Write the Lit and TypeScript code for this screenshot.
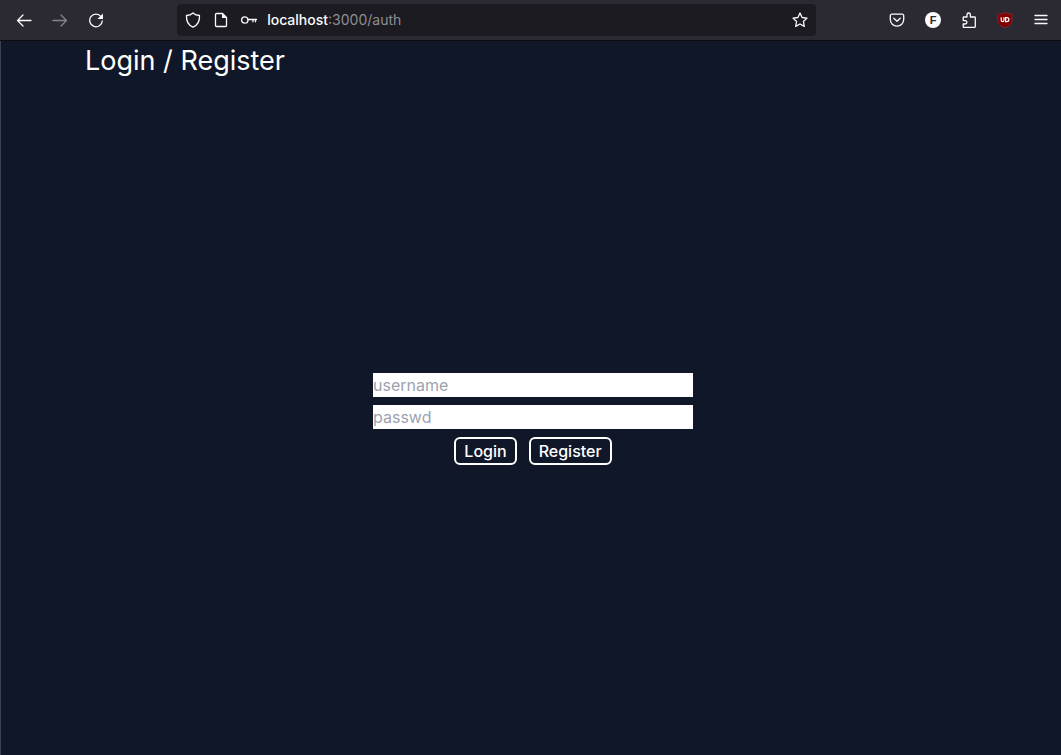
import { LitElement, html, css, svg } from "lit";
import { customElement, state } from "lit/decorators.js";

const icons = {
  back: svg`<path d="M15 8.500H1.500M7 3 1.500 8.500 7 14"/>`,
  forward: svg`<path d="M1 8.500h13.500M9 3l5.500 5.500L9 14"/>`,
  reload: svg`<path d="M13 4.600A6.300 6.300 0 1 0 14.300 9"/><path class="solid" d="M15 1.500v5.500H9.500z"/>`,
  shield: svg`<path d="M8 .9C6.300 2.400 4 3.300 1.500 3.500c-.3 5.500 1.700 9.700 6.500 11.700 4.800-2 6.800-6.200 6.500-11.700C12 3.300 9.700 2.400 8 .9z"/>`,
  page: svg`<path d="M3.500 1.500h6l4 4v8a1 1 0 0 1-1 1h-9a1 1 0 0 1-1-1v-11a1 1 0 0 1 1-1z"/><path class="solid" d="M9 1.500v4.500h4.500z"/>`,
  key: svg`<circle cx="3.800" cy="8" r="3.200"/><path d="M7 7.500h8.500M14.500 7.500v2.300M12 7.500v2.300"/>`,
  star: svg`<path d="m8 1 2.100 4.500 4.900.6-3.600 3.400.9 4.900L8 12l-4.300 2.400.9-4.900L1 6.100l4.900-.6z"/>`,
  pocket: svg`<path d="M2.800 2.200h10.400a1.500 1.500 0 0 1 1.500 1.500v3.800a6.700 6.700 0 0 1-13.400 0V3.700a1.500 1.500 0 0 1 1.500-1.500z"/><path d="M4.800 6.300 8 9.300l3.200-3"/>`,
  puzzle: svg`<path d="M2.500 5h3.500V2.700a1.700 1.700 0 0 1 3.400 0V5H13.500a.8.8 0 0 1 .8.8v8.800a.8.8 0 0 1-.8.8H3a.8.8 0 0 1-.8-.8V12h2a1.700 1.700 0 0 0 0-3.400h-2V5.400z"/>`,
  menu: svg`<path d="M2 3.500h12M2 7.500h12M2 11.500h12"/>`,
};

const icon = (name: keyof typeof icons) =>
  html`<svg class="icon" viewBox="0 0 16 16" aria-hidden="true">${icons[name]}</svg>`;

@customElement("browser-toolbar")
export class BrowserToolbar extends LitElement {
  static styles = css`
    :host {
      display: flex;
      align-items: center;
      height: 40px;
      padding: 0 2px 0 6px;
      background: #2b2a33;
      border-bottom: 1px solid #0c0c0d;
      color: #fbfbfe;
      font-family: Inter, "Liberation Sans", sans-serif;
    }
    .tool,
    .inner {
      display: grid;
      place-items: center;
      flex: none;
      padding: 0;
      border: 0;
      background: none;
      color: inherit;
    }
    .tool {
      width: 36px;
      height: 36px;
    }
    .inner {
      width: 28px;
      height: 32px;
    }
    .tool:disabled {
      color: #85848b;
    }
    .icon {
      display: block;
      width: 16px;
      height: 16px;
      fill: none;
      stroke: currentColor;
      stroke-width: 1.300;
      stroke-linecap: round;
      stroke-linejoin: round;
    }
    .solid {
      fill: currentColor;
      stroke: none;
    }
    .address {
      display: flex;
      align-items: center;
      flex: 1;
      min-width: 0;
      height: 32px;
      margin: 0 6%;
      padding: 0 2px;
      border-radius: 4px;
      background: #1c1b22;
    }
    .url {
      flex: 1;
      min-width: 0;
      padding-left: 4px;
      font-size: 14px;
      line-height: 20px;
      color: #8f8f94;
      white-space: nowrap;
      outline: none;
    }
    .host {
      color: #fbfbfe;
      font-weight: 500;
    }
    .avatar {
      display: grid;
      place-items: center;
      width: 16px;
      height: 16px;
      border-radius: 50%;
      background: #fbfbfe;
      color: #2b2a33;
      font-size: 11px;
      line-height: 16px;
      font-weight: 800;
    }
    .blocker {
      display: block;
      width: 16px;
      height: 16px;
    }
    .blocker-shape {
      fill: #800000;
      stroke: #a03038;
      stroke-width: 0.600;
    }
    .blocker-mark {
      fill: none;
      stroke: #fff;
      stroke-width: 1.200;
    }
  `;

  render() {
    return html`
      <button class="tool" aria-label="Back">${icon("back")}</button>
      <button class="tool" aria-label="Forward" disabled>${icon("forward")}</button>
      <button class="tool" aria-label="Reload">${icon("reload")}</button>
      <div class="address">
        <button class="inner" aria-label="Tracking protection">${icon("shield")}</button>
        <button class="inner" aria-label="Site information">${icon("page")}</button>
        <button class="inner" aria-label="Saved logins">${icon("key")}</button>
        <div class="url" role="textbox" aria-label="Address" contenteditable="true" spellcheck="false"><span class="host">localhost</span>:3000/auth</div>
        <button class="inner" aria-label="Bookmark">${icon("star")}</button>
      </div>
      <button class="tool" aria-label="Pocket">${icon("pocket")}</button>
      <button class="tool" aria-label="Account"><span class="avatar">F</span></button>
      <button class="tool" aria-label="Extensions">${icon("puzzle")}</button>
      <button class="tool" aria-label="Content blocker">
        <svg class="blocker" viewBox="0 0 16 16" aria-hidden="true">
          <path class="blocker-shape" d="M8 .4C6 1.600 3.500 2.200 .9 2.200V8c0 4 2.600 5.800 7.100 7.700 4.500-1.900 7.100-3.700 7.100-7.700V2.200C12.500 2.200 10 1.600 8 .4z" />
          <path class="blocker-mark" d="M4.200 5.200v2.800q0 1.600 1.400 1.600T7 8V5.200M8.600 5.600h1.300a2 2 0 0 1 0 4H8.600z" />
        </svg>
      </button>
      <button class="tool" aria-label="Menu">${icon("menu")}</button>
    `;
  }
}

@customElement("auth-page")
export class AuthPage extends LitElement {
  static styles = css`
    :host {
      display: flex;
      flex-direction: column;
      padding-left: 4px;
      color: #fff;
      font-family: Inter, "Liberation Sans", sans-serif;
      font-size: 16px;
      line-height: 24px;
    }
    .container {
      display: flex;
      flex-direction: column;
      flex: 1;
      width: 100%;
      max-width: 896px;
      margin: 0 auto;
    }
    .title {
      margin: 0 0 2px;
      font-size: 27px;
      line-height: 40px;
      font-weight: 400;
    }
    .form {
      display: flex;
      flex-direction: column;
      align-items: center;
      justify-content: center;
      flex: 1;
      gap: 8px;
    }
    .field {
      box-sizing: border-box;
      width: 320px;
      max-width: 100%;
      height: 24px;
      padding: 0;
      border: 0;
      border-radius: 0;
      background: #fff;
      color: #111827;
      font: inherit;
    }
    .field::placeholder {
      color: #9ca3af;
      opacity: 1;
    }
    .actions {
      display: flex;
      gap: 12px;
    }
    .action {
      padding: 0 8px;
      border: 2px solid #fff;
      border-radius: 6px;
      background: none;
      color: inherit;
      font: inherit;
      font-weight: 500;
    }
  `;

  @state() private username = "";
  @state() private password = "";

  render() {
    return html`
      <main class="container">
        <h1 class="title">Login / Register</h1>
        <form class="form" @submit=${(e: Event) => e.preventDefault()}>
          <input
            class="field"
            type="text"
            placeholder="username"
            aria-label="username"
            .value=${this.username}
            @input=${(e: Event) => (this.username = (e.target as HTMLInputElement).value)}
          />
          <input
            class="field"
            type="password"
            placeholder="passwd"
            aria-label="passwd"
            .value=${this.password}
            @input=${(e: Event) => (this.password = (e.target as HTMLInputElement).value)}
          />
          <div class="actions">
            <button class="action" type="submit">Login</button>
            <button class="action" type="button">Register</button>
          </div>
        </form>
      </main>
    `;
  }
}

@customElement("app-root")
export class AppRoot extends LitElement {
  static styles = css`
    :host {
      display: flex;
      flex-direction: column;
      box-sizing: border-box;
      min-height: 100vh;
      background: #101728;
    }
    .page {
      flex: 1;
      border-left: 1px solid #3b4252;
    }
  `;

  render() {
    return html`
      <browser-toolbar></browser-toolbar>
      <auth-page class="page"></auth-page>
    `;
  }
}
